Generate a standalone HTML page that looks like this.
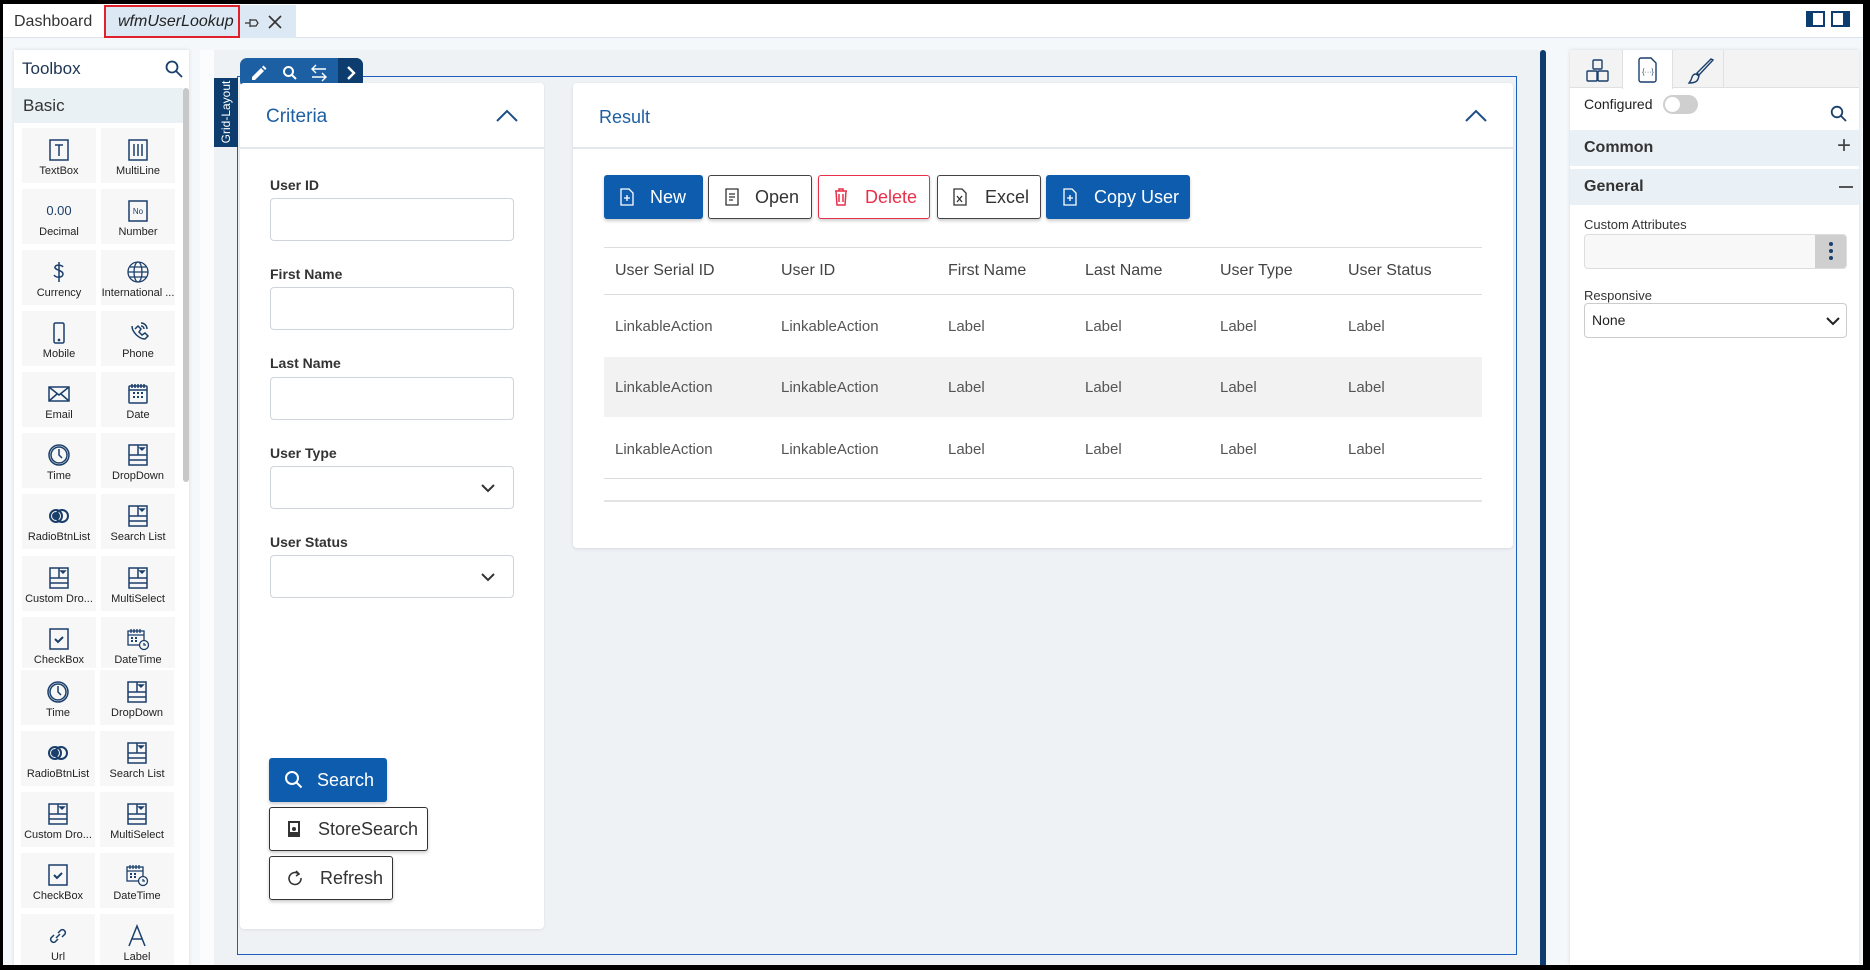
<!DOCTYPE html>
<html><head><meta charset="utf-8">
<style>
*{box-sizing:border-box;margin:0;padding:0}
body{width:1870px;height:970px;overflow:hidden;background:#000;font-family:"Liberation Sans",Arial,sans-serif;position:relative}
.a{position:absolute}
#app{position:absolute;left:3px;top:4px;width:1860px;height:961px;background:#f5f8fb;overflow:hidden}
.tx{position:absolute;white-space:nowrap}
.cell{position:absolute;width:74px;height:55px;background:#f7f7f7;text-align:center;font-size:11px;color:#222}
.cell svg{position:absolute;left:25px;top:10px;width:24px;height:24px}
.cell span{position:absolute;left:0;right:0;top:37px;white-space:nowrap;overflow:hidden}
.inp{position:absolute;left:270px;width:244px;height:43px;border:1px solid #cfd4da;border-radius:4px;background:#fff}
.lbl{position:absolute;left:270px;font-size:14px;color:#333;font-weight:bold}
.btn{position:absolute;height:44px;border-radius:3px;font-size:18px;display:flex;align-items:center;box-shadow:0 2px 3px rgba(0,0,0,.2)}
.pri{background:#0d5cad;color:#fff}
.sec{background:#fff;border:1px solid #333;color:#333}
.th{position:absolute;font-size:16px;color:#444}
.td{position:absolute;font-size:15px;color:#555}
</style></head><body>
<svg width="0" height="0" style="position:absolute">
<defs>
<g id="i-tb" fill="none" stroke="#1a3f6b" stroke-width="1.5"><rect x="3" y="2" width="18" height="20"/><path d="M8 7h8M12 7v11"/></g>
<g id="i-ml" fill="none" stroke="#1a3f6b" stroke-width="1.5"><rect x="3" y="2" width="18" height="20"/><path d="M8 6v12M12 6v12M16 6v12"/></g>
<g id="i-no" fill="none" stroke="#1a3f6b" stroke-width="1.5"><rect x="3" y="2" width="18" height="20"/><text x="12" y="15" font-size="8" fill="#1a3f6b" stroke="none" text-anchor="middle" font-family="Liberation Sans">No</text></g>
<g id="i-cur" fill="none" stroke="#1a3f6b" stroke-width="1.5"><path d="M16 7c-1-2-7-3-8 0s8 3 8 7-7 4-9 1M12 2v20"/></g>
<g id="i-gl" fill="none" stroke="#1a3f6b" stroke-width="1.3"><circle cx="12" cy="12" r="10"/><ellipse cx="12" cy="12" rx="4" ry="10"/><path d="M2 12h20M4 7h16M4 17h16"/></g>
<g id="i-mob" fill="none" stroke="#1a3f6b" stroke-width="1.5"><rect x="7" y="2" width="10" height="20" rx="1.5"/><circle cx="12" cy="19" r=".6" fill="#1a3f6b"/></g>
<g id="i-ph" fill="none" stroke="#1a3f6b" stroke-width="1.5"><path d="M9 8l3-3 3 3-2 3 3 3 3-2 3 3-3 3c-6 0-13-7-13-13"/><path d="M15 2a6 6 0 0 1 6 6M15 5a3 3 0 0 1 3 3"/></g>
<g id="i-em" fill="none" stroke="#1a3f6b" stroke-width="1.5"><rect x="2" y="5" width="20" height="14"/><path d="M2 5l10 8 10-8M2 19l8-7M22 19l-8-7"/></g>
<g id="i-dt" fill="none" stroke="#1a3f6b" stroke-width="1.5"><rect x="3" y="4" width="18" height="17" rx="1"/><path d="M3 8h18M6 2v4M9 2v4M12 2v4M15 2v4M18 2v4"/><path d="M7 11h2M11 11h2M15 11h2M7 15h2M11 15h2M15 15h2" stroke-width="2"/></g>
<g id="i-tm" fill="none" stroke="#1a3f6b" stroke-width="1.5"><circle cx="12" cy="12" r="10"/><circle cx="12" cy="12" r="8"/><path d="M12 6v6l3 3"/></g>
<g id="i-dd" fill="none" stroke="#1a3f6b" stroke-width="1.5"><rect x="3" y="2" width="18" height="20"/><path d="M3 12h18M12 2v10M3 17h18"/><path d="M14 5h4l-2 2z" fill="#1a3f6b"/></g>
<g id="i-rb" fill="none" stroke="#1a3f6b" stroke-width="2"><circle cx="9" cy="12" r="6"/><circle cx="15" cy="12" r="6"/><circle cx="9" cy="12" r="3" fill="#1a3f6b"/></g>
<g id="i-cb" fill="none" stroke="#1a3f6b" stroke-width="1.5"><rect x="3" y="2" width="18" height="20"/><path d="M8 12l3 3 5-5" stroke-width="2"/></g>
<g id="i-dtt" fill="none" stroke="#1a3f6b" stroke-width="1.3"><rect x="2" y="4" width="16" height="14"/><path d="M2 8h16M5 2v4M8 2v4M11 2v4M14 2v4"/><path d="M5 11h2M9 11h2M5 14h2M9 14h2" stroke-width="2"/><circle cx="18" cy="18" r="4.5" fill="#f7f7f7"/><path d="M18 16v2h2"/></g>
<g id="i-url" fill="none" stroke="#1a3f6b" stroke-width="1.5"><path d="M10 14l4-4M8 11l-3 3a3 3 0 0 0 4 4l3-3M16 13l3-3a3 3 0 0 0-4-4l-3 3"/></g>
<g id="i-lb" fill="none" stroke="#1a3f6b" stroke-width="1.5"><path d="M4 22L12 2l8 20M7 15h10"/></g>
</defs></svg>

<div id="app">
<div class="a" style="left:0;top:0;width:1860px;height:34px;background:#fff;border-bottom:1px solid #dde3ea"></div>
<div class="tx" style="left:11px;top:9px;font-size:16px;color:#333">Dashboard</div>
<div class="a" style="left:101px;top:1px;width:192px;height:33px;background:#dce8f4"></div>
<div class="a" style="left:101px;top:1px;width:136px;height:33px;border:2px solid #e0202a"></div>
<div class="tx" style="left:115px;top:9px;font-size:16px;color:#222;font-style:italic">wfmUserLookup</div>
<svg class="a" style="left:241px;top:11px" width="16" height="16" viewBox="0 0 16 16" fill="none" stroke="#333" stroke-width="1.2"><path d="M1 8h5M6 4v8M6 5h6l2 3-2 3H6"/></svg>
<svg class="a" style="left:265px;top:11px" width="14" height="14" viewBox="0 0 14 14" stroke="#333" stroke-width="1.6"><path d="M1 1l12 12M13 1L1 13"/></svg>
<div class="a" style="left:1803px;top:7px;width:19px;height:16px;border:2px solid #0d3c6e;border-left:7px solid #0d3c6e"></div>
<div class="a" style="left:1828px;top:7px;width:19px;height:16px;border:2px solid #0d3c6e;border-right:7px solid #0d3c6e"></div>

<div class="a" style="left:11px;top:46px;width:175px;height:920px;background:#fff;box-shadow:0 0 4px rgba(0,0,0,.12)"></div>
<div class="tx" style="left:19px;top:55px;font-size:17px;color:#1d3553">Toolbox</div>
<svg class="a" style="left:162px;top:56px" width="18" height="18" viewBox="0 0 18 18" fill="none" stroke="#1a3f6b" stroke-width="1.8"><circle cx="7" cy="7" r="5.5"/><path d="M11 11l6 6"/></svg>
<div class="a" style="left:11px;top:84px;width:169px;height:35px;background:#eaf1f5"></div>
<div class="tx" style="left:20px;top:92px;font-size:17px;color:#333">Basic</div>
<div class="a" style="left:180px;top:84px;width:6px;height:394px;background:#c8c8c8;border-radius:3px"></div>

<div class="cell" style="left:19px;top:124px"><svg viewBox="0 0 24 24"><use href="#i-tb"/></svg><span>TextBox</span></div>
<div class="cell" style="left:98px;top:124px"><svg viewBox="0 0 24 24"><use href="#i-ml"/></svg><span>MultiLine</span></div>
<div class="cell" style="left:19px;top:185px"><div style="position:absolute;left:0;right:0;top:14px;font-size:13px;color:#1a3f6b">0.00</div><span>Decimal</span></div>
<div class="cell" style="left:98px;top:185px"><svg viewBox="0 0 24 24"><use href="#i-no"/></svg><span>Number</span></div>
<div class="cell" style="left:19px;top:246px"><svg viewBox="0 0 24 24"><use href="#i-cur"/></svg><span>Currency</span></div>
<div class="cell" style="left:98px;top:246px"><svg viewBox="0 0 24 24"><use href="#i-gl"/></svg><span>International ...</span></div>
<div class="cell" style="left:19px;top:307px"><svg viewBox="0 0 24 24"><use href="#i-mob"/></svg><span>Mobile</span></div>
<div class="cell" style="left:98px;top:307px"><svg viewBox="0 0 24 24"><use href="#i-ph"/></svg><span>Phone</span></div>
<div class="cell" style="left:19px;top:368px"><svg viewBox="0 0 24 24"><use href="#i-em"/></svg><span>Email</span></div>
<div class="cell" style="left:98px;top:368px"><svg viewBox="0 0 24 24"><use href="#i-dt"/></svg><span>Date</span></div>
<div class="cell" style="left:19px;top:429px"><svg viewBox="0 0 24 24"><use href="#i-tm"/></svg><span>Time</span></div>
<div class="cell" style="left:98px;top:429px"><svg viewBox="0 0 24 24"><use href="#i-dd"/></svg><span>DropDown</span></div>
<div class="cell" style="left:19px;top:490px"><svg viewBox="0 0 24 24"><use href="#i-rb"/></svg><span>RadioBtnList</span></div>
<div class="cell" style="left:98px;top:490px"><svg viewBox="0 0 24 24"><use href="#i-dd"/></svg><span>Search List</span></div>
<div class="cell" style="left:19px;top:552px"><svg viewBox="0 0 24 24"><use href="#i-dd"/></svg><span>Custom Dro...</span></div>
<div class="cell" style="left:98px;top:552px"><svg viewBox="0 0 24 24"><use href="#i-dd"/></svg><span>MultiSelect</span></div>
<div class="cell" style="left:19px;top:613px;height:51px"><svg viewBox="0 0 24 24"><use href="#i-cb"/></svg><span>CheckBox</span></div>
<div class="cell" style="left:98px;top:613px;height:51px"><svg viewBox="0 0 24 24"><use href="#i-dtt"/></svg><span>DateTime</span></div>
<div class="cell" style="left:18px;top:666px"><svg viewBox="0 0 24 24"><use href="#i-tm"/></svg><span>Time</span></div>
<div class="cell" style="left:97px;top:666px"><svg viewBox="0 0 24 24"><use href="#i-dd"/></svg><span>DropDown</span></div>
<div class="cell" style="left:18px;top:727px"><svg viewBox="0 0 24 24"><use href="#i-rb"/></svg><span>RadioBtnList</span></div>
<div class="cell" style="left:97px;top:727px"><svg viewBox="0 0 24 24"><use href="#i-dd"/></svg><span>Search List</span></div>
<div class="cell" style="left:18px;top:788px"><svg viewBox="0 0 24 24"><use href="#i-dd"/></svg><span>Custom Dro...</span></div>
<div class="cell" style="left:97px;top:788px"><svg viewBox="0 0 24 24"><use href="#i-dd"/></svg><span>MultiSelect</span></div>
<div class="cell" style="left:18px;top:849px"><svg viewBox="0 0 24 24"><use href="#i-cb"/></svg><span>CheckBox</span></div>
<div class="cell" style="left:97px;top:849px"><svg viewBox="0 0 24 24"><use href="#i-dtt"/></svg><span>DateTime</span></div>
<div class="cell" style="left:18px;top:910px"><svg viewBox="0 0 24 24"><use href="#i-url"/></svg><span>Url</span></div>
<div class="cell" style="left:97px;top:910px"><svg viewBox="0 0 24 24"><use href="#i-lb"/></svg><span>Label</span></div>

<div class="a" style="left:197px;top:46px;width:14px;height:920px;background:#fafcfd"></div>
<div class="a" style="left:211px;top:46px;width:1330px;height:920px;background:#eef2f5"></div>
<div class="a" style="left:234px;top:72px;width:1280px;height:879px;border:1px solid #1d5fbf"></div>
<div class="a" style="left:211px;top:74px;width:24px;height:69px;background:#0d3c6e"></div>
<div class="tx" style="left:211px;top:74px;width:24px;height:69px;"><div style="position:absolute;left:12px;top:34px;transform:translate(-50%,-50%) rotate(-90deg);color:#fff;font-size:12px">Grid-Layout</div></div>
<div class="a" style="left:237px;top:54px;width:123px;height:30px;background:#1d5fa3;border-radius:7px;overflow:hidden"><div style="position:absolute;right:0;top:0;width:25px;height:30px;background:#0d3c6e"></div></div>
<svg class="a" style="left:247px;top:60px" width="18" height="18" viewBox="0 0 18 18" fill="#fff"><path d="M2 13l9-9 3 3-9 9H2z M12 3l1.5-1.5 3 3L15 6z"/></svg>
<svg class="a" style="left:279px;top:61px" width="16" height="16" viewBox="0 0 16 16" fill="none" stroke="#fff" stroke-width="2"><circle cx="6.5" cy="6.5" r="4.5"/><path d="M10 10l4 4"/></svg>
<svg class="a" style="left:306px;top:59px" width="20" height="20" viewBox="0 0 20 20" fill="none" stroke="#fff" stroke-width="1.4"><path d="M17 6H3M7 2L3 6l4 4M3 14h14M13 10l4 4-4 4"/></svg>
<svg class="a" style="left:340px;top:61px" width="16" height="16" viewBox="0 0 16 16" fill="none" stroke="#fff" stroke-width="2.4"><path d="M5 2l6 6-6 6"/></svg>

<div class="a" style="left:237px;top:79px;width:304px;height:846px;background:#fff;border-radius:4px;box-shadow:0 1px 3px rgba(0,0,0,.08)"></div>
<div class="a" style="left:237px;top:143px;width:304px;height:2px;background:#e3e6ea"></div>
<div class="tx" style="left:263px;top:102px;font-size:19px;color:#1d5fa3">Criteria</div>
<svg class="a" style="left:493px;top:105px" width="22" height="14" viewBox="0 0 22 14" fill="none" stroke="#1d4f86" stroke-width="2"><path d="M1 12L11 2l10 10"/></svg>
<div class="lbl" style="left:267px;top:173px">User ID</div>
<div class="inp" style="left:267px;top:194px"></div>
<div class="lbl" style="left:267px;top:262px">First Name</div>
<div class="inp" style="left:267px;top:283px"></div>
<div class="lbl" style="left:267px;top:351px">Last Name</div>
<div class="inp" style="left:267px;top:373px"></div>
<div class="lbl" style="left:267px;top:441px">User Type</div>
<div class="inp" style="left:267px;top:462px"></div>
<svg class="a" style="left:478px;top:480px" width="14" height="9" viewBox="0 0 14 9" fill="none" stroke="#333" stroke-width="2"><path d="M1 1l6 6 6-6"/></svg>
<div class="lbl" style="left:267px;top:530px">User Status</div>
<div class="inp" style="left:267px;top:551px"></div>
<svg class="a" style="left:478px;top:569px" width="14" height="9" viewBox="0 0 14 9" fill="none" stroke="#333" stroke-width="2"><path d="M1 1l6 6 6-6"/></svg>

<div class="btn pri" style="left:266px;top:754px;width:118px"><svg style="margin-left:15px" width="20" height="20" viewBox="0 0 20 20" fill="none" stroke="#fff" stroke-width="2"><circle cx="8" cy="8" r="6"/><path d="M12.5 12.5l5 5"/></svg><span style="margin-left:13px">Search</span></div>
<div class="btn sec" style="left:266px;top:803px;width:159px"><svg style="margin-left:17px" width="14" height="18" viewBox="0 0 14 18"><rect x="1" y="1" width="12" height="16" fill="#333"/><rect x="3" y="3" width="8" height="9" fill="#fff"/><circle cx="7" cy="9" r="2" fill="#333"/></svg><span style="margin-left:17px">StoreSearch</span></div>
<div class="btn sec" style="left:266px;top:852px;width:124px"><svg style="margin-left:17px" width="16" height="16" viewBox="0 0 16 16" fill="none" stroke="#333" stroke-width="1.6"><path d="M12 4a6 6 0 1 0 2 4"/><path d="M9 1l3 3-3 2" /></svg><span style="margin-left:17px">Refresh</span></div>

<div class="a" style="left:570px;top:79px;width:940px;height:465px;background:#fff;border-radius:4px;box-shadow:0 1px 3px rgba(0,0,0,.1)"></div>
<div class="a" style="left:570px;top:143px;width:940px;height:2px;background:#e3e6ea"></div>
<div class="tx" style="left:596px;top:103px;font-size:18px;color:#1d5fa3">Result</div>
<svg class="a" style="left:1462px;top:105px" width="22" height="14" viewBox="0 0 22 14" fill="none" stroke="#1d4f86" stroke-width="2"><path d="M1 12L11 2l10 10"/></svg>

<div class="btn pri" style="left:601px;top:171px;width:99px"><svg style="margin-left:16px" width="14" height="18" viewBox="0 0 14 18" fill="none" stroke="#fff" stroke-width="1.3"><path d="M1 1h8l4 4v12H1z"/><path d="M7 7v6M4 10h6"/></svg><span style="margin-left:16px">New</span></div>
<div class="btn sec" style="left:705px;top:171px;width:104px;border-color:#444"><svg style="margin-left:16px" width="14" height="18" viewBox="0 0 14 18" fill="none" stroke="#333" stroke-width="1.3"><path d="M1 1h12v16H1z"/><path d="M4 6h6M4 9h6M4 12h4"/></svg><span style="margin-left:16px">Open</span></div>
<div class="btn sec" style="left:815px;top:171px;width:112px;border-color:#e8304a;color:#e8304a"><svg style="margin-left:15px" width="14" height="18" viewBox="0 0 14 18" fill="none" stroke="#e8304a" stroke-width="1.5"><path d="M1 3h12M5 3V1h4v2M2 3l1 14h8l1-14M5 6v8M9 6v8"/></svg><span style="margin-left:17px">Delete</span></div>
<div class="btn sec" style="left:934px;top:171px;width:104px;border-color:#444"><svg style="margin-left:15px" width="14" height="18" viewBox="0 0 14 18" fill="none" stroke="#333" stroke-width="1.3"><path d="M1 1h8l4 4v12H1z"/><path d="M4 8l5 6M9 8l-5 6"/></svg><span style="margin-left:18px">Excel</span></div>
<div class="btn pri" style="left:1043px;top:171px;width:144px"><svg style="margin-left:17px" width="14" height="18" viewBox="0 0 14 18" fill="none" stroke="#fff" stroke-width="1.3"><path d="M1 1h8l4 4v12H1z"/><path d="M7 7v6M4 10h6"/></svg><span style="margin-left:17px">Copy User</span></div>

<div class="a" style="left:601px;top:243px;width:878px;height:1px;background:#ddd"></div>
<div class="th" style="left:612px;top:258px">User Serial ID</div>
<div class="th" style="left:778px;top:258px">User ID</div>
<div class="th" style="left:945px;top:258px">First Name</div>
<div class="th" style="left:1082px;top:258px">Last Name</div>
<div class="th" style="left:1217px;top:258px">User Type</div>
<div class="th" style="left:1345px;top:258px">User Status</div>
<div class="a" style="left:601px;top:290px;width:878px;height:1px;background:#ddd"></div>
<div class="a" style="left:601px;top:353px;width:878px;height:60px;background:#f2f2f2"></div>
<div class="a" style="left:601px;top:474px;width:878px;height:1px;background:#ddd"></div>
<div class="a" style="left:601px;top:496px;width:878px;height:2px;background:#e3e3e3"></div>

<div class="td" style="left:612px;top:314px">LinkableAction</div><div class="td" style="left:778px;top:314px">LinkableAction</div><div class="td" style="left:945px;top:314px">Label</div><div class="td" style="left:1082px;top:314px">Label</div><div class="td" style="left:1217px;top:314px">Label</div><div class="td" style="left:1345px;top:314px">Label</div>
<div class="td" style="left:612px;top:375px">LinkableAction</div><div class="td" style="left:778px;top:375px">LinkableAction</div><div class="td" style="left:945px;top:375px">Label</div><div class="td" style="left:1082px;top:375px">Label</div><div class="td" style="left:1217px;top:375px">Label</div><div class="td" style="left:1345px;top:375px">Label</div>
<div class="td" style="left:612px;top:437px">LinkableAction</div><div class="td" style="left:778px;top:437px">LinkableAction</div><div class="td" style="left:945px;top:437px">Label</div><div class="td" style="left:1082px;top:437px">Label</div><div class="td" style="left:1217px;top:437px">Label</div><div class="td" style="left:1345px;top:437px">Label</div>

<div class="a" style="left:1537px;top:46px;width:6px;height:915px;background:#0d3c6e;border-radius:3px 3px 0 0"></div>

<div class="a" style="left:1567px;top:46px;width:289px;height:915px;background:#fff;box-shadow:0 0 4px rgba(0,0,0,.12)"></div>
<div class="a" style="left:1567px;top:46px;width:289px;height:38px;background:#f3f3f3;border-bottom:1px solid #e0e0e0"></div>
<div class="a" style="left:1619px;top:46px;width:51px;height:39px;background:#fff;border-left:1px solid #e0e0e0;border-right:1px solid #e0e0e0"></div>
<div class="a" style="left:1720px;top:46px;width:1px;height:38px;background:#e0e0e0"></div>
<svg class="a" style="left:1582px;top:54px" width="26" height="26" viewBox="0 0 26 26" fill="none" stroke="#1a3f6b" stroke-width="1.4"><rect x="8" y="2" width="9" height="9" rx="1"/><rect x="2" y="13" width="10" height="10" rx="1"/><rect x="13" y="13" width="10" height="10" rx="1"/></svg>
<svg class="a" style="left:1635px;top:52px" width="20" height="28" viewBox="0 0 20 28" fill="none" stroke="#1a3f6b" stroke-width="1.4"><path d="M3 2h10l5 5v17a2 2 0 0 1-2 2H3a2 2 0 0 1-2-2V4a2 2 0 0 1 2-2z"/><text x="10" y="18" font-size="7" fill="#1a3f6b" stroke="none" text-anchor="middle" font-family="Liberation Sans">{···}</text></svg>
<svg class="a" style="left:1684px;top:54px" width="28" height="28" viewBox="0 0 28 28" fill="none" stroke="#1a3f6b" stroke-width="1.4"><path d="M26 2L12 17l-2-2L24 1z"/><path d="M9 16c-4 0-4 4-5 6l-2 3c4 0 8-1 9-4l1-3z"/></svg>
<div class="tx" style="left:1581px;top:92px;font-size:14px;color:#222">Configured</div>
<div class="a" style="left:1660px;top:91px;width:35px;height:19px;border-radius:10px;background:#cfcfcf"><div style="position:absolute;left:2px;top:2px;width:15px;height:15px;border-radius:50%;background:#fff"></div></div>
<svg class="a" style="left:1827px;top:101px" width="17" height="17" viewBox="0 0 17 17" fill="none" stroke="#1a3f6b" stroke-width="1.8"><circle cx="7" cy="7" r="5.3"/><path d="M11 11l5 5"/></svg>
<div class="a" style="left:1567px;top:126px;width:289px;height:36px;background:#eaf1f6"></div>
<div class="tx" style="left:1581px;top:135px;font-size:16px;font-weight:bold;color:#333">Common</div>
<div class="tx" style="left:1834px;top:128px;font-size:24px;color:#444;font-weight:300">+</div>
<div class="a" style="left:1567px;top:165px;width:289px;height:36px;background:#eaf1f6"></div>
<div class="tx" style="left:1581px;top:174px;font-size:16px;font-weight:bold;color:#333">General</div>
<div class="a" style="left:1836px;top:182px;width:14px;height:2px;background:#555"></div>
<div class="tx" style="left:1581px;top:213px;font-size:13px;color:#333">Custom Attributes</div>
<div class="a" style="left:1581px;top:230px;width:263px;height:35px;background:#f8f8f8;border:1px solid #ddd;border-radius:4px;overflow:hidden"><div style="position:absolute;right:0;top:0;width:31px;height:35px;background:#cfcfcf"></div><div style="position:absolute;right:13px;top:7px;width:4px;height:4px;border-radius:50%;background:#1a3f6b;box-shadow:0 7px 0 #1a3f6b,0 14px 0 #1a3f6b"></div></div>
<div class="tx" style="left:1581px;top:284px;font-size:13px;color:#333">Responsive</div>
<div class="a" style="left:1581px;top:299px;width:263px;height:35px;background:#fff;border:1px solid #ccc;border-radius:4px"></div>
<div class="tx" style="left:1589px;top:308px;font-size:14px;color:#222">None</div>
<svg class="a" style="left:1823px;top:313px" width="14" height="9" viewBox="0 0 14 9" fill="none" stroke="#222" stroke-width="2"><path d="M1 1l6 6 6-6"/></svg>
</div>
</body></html>
